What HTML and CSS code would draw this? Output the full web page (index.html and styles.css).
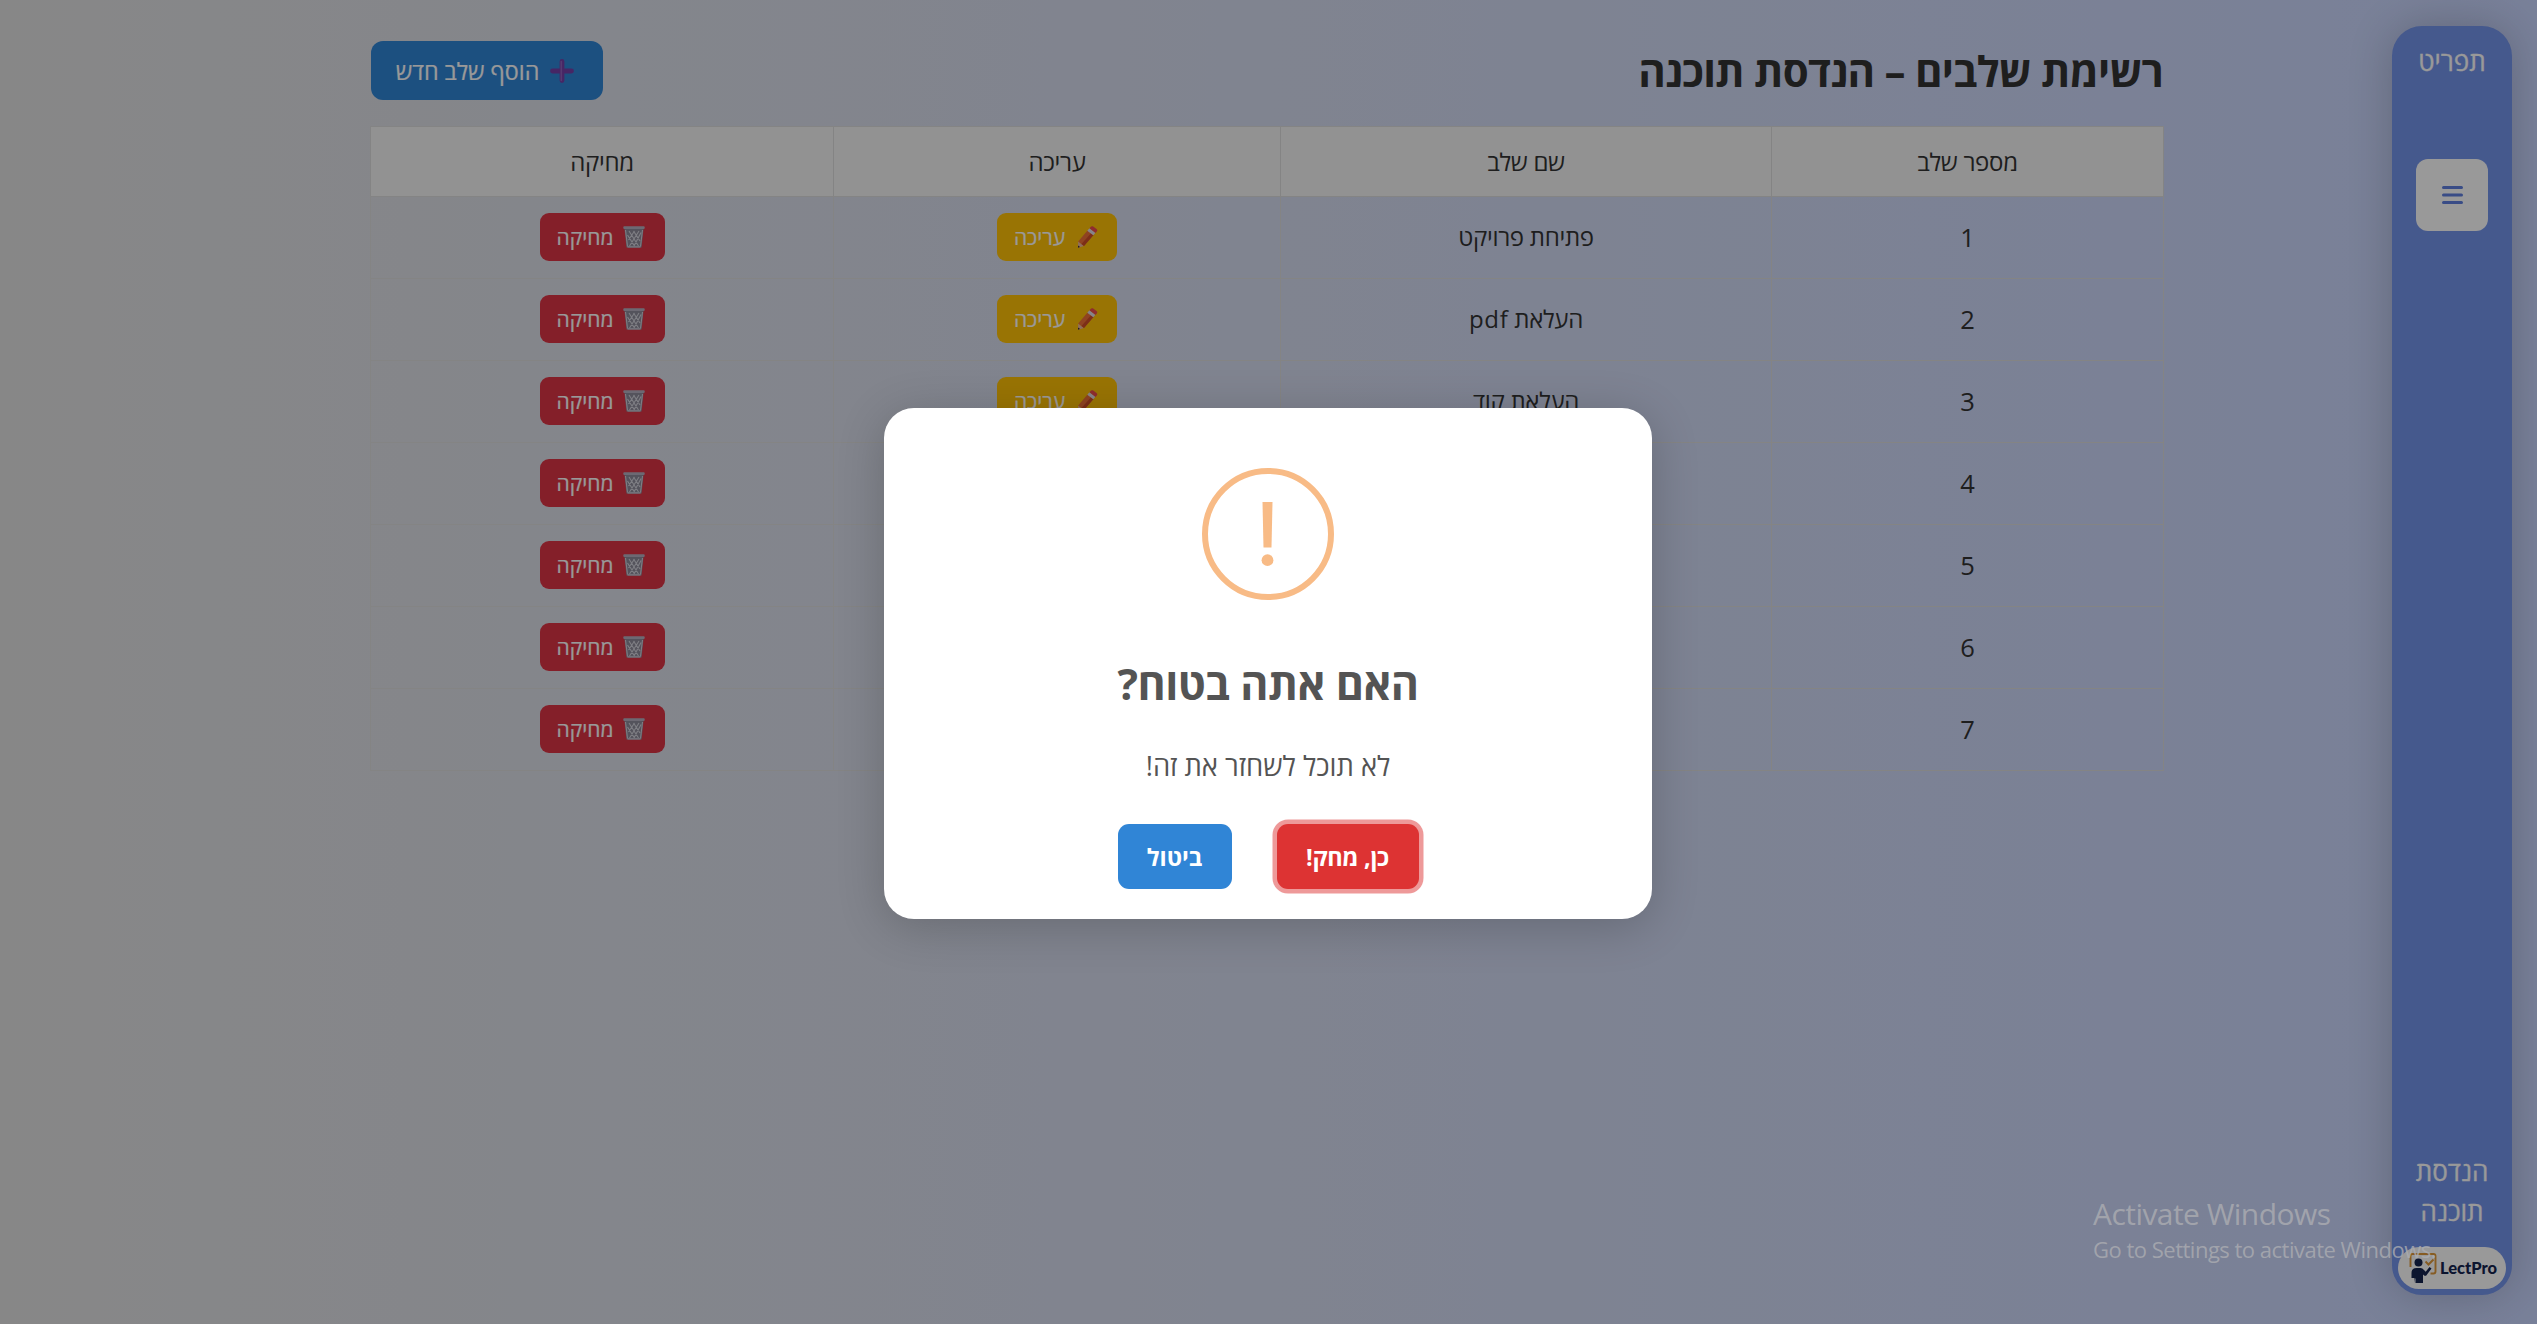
FILE: index.html
```html
<!DOCTYPE html>
<html lang="he" dir="rtl">
<head>
<meta charset="utf-8">
<title>רשימת שלבים – הנדסת תוכנה</title>
<link rel="stylesheet" href="styles.css">
</head>
<body>
<svg width="0" height="0" class="defs" aria-hidden="true">
  <symbol id="trash" viewBox="0 0 22 22">
    <path d="M1.500 3 3.500 21.500h15l2-18.500z" fill="#8d8b9a"/>
    <path d="M2.500 4 4.500 20.500M19.500 4l-2 16.500M6 5l9.500 15M10.500 5l6.500 10M16 5 6.500 20M11.500 5 5.500 14M18 6.500l-7 13.500M4.500 9l7 11" stroke="#d3d3dc" stroke-width="1.100" fill="none"/>
    <path d="M4.500 20.900h13" stroke="#c9cad6" stroke-width="1.400"/>
    <rect x="0.300" y="0.300" width="21.400" height="2.800" rx="1" fill="#b5b0c0"/>
  </symbol>
  <symbol id="pencil" viewBox="0 0 23 22">
    <path d="M3 21.800 3.200 15.500 9 20z" fill="#efb79e"/>
    <path d="M3 21.800l.1-2.300 2 1.600z" fill="#3a2a2a"/>
    <path d="M3.200 15.500 12.500 4.500 18.500 9 9 20z" fill="#ee7038"/>
    <path d="M6.500 18 16 7.200 18.500 9 9 20z" fill="#cf4d29"/>
    <path d="M12.300 4.800 14.500 2.200l6 4.500-2.200 2.600z" fill="#e0dce8"/>
    <path d="M14.500 2.200 15.600.9c.7-.8 1.700-.9 2.600-.3l3.300 2.500c.9.7 1 1.600.3 2.400l-1.300 1.400z" fill="#ee4a4d"/>
  </symbol>
  <symbol id="plus" viewBox="0 0 24 24">
    <path d="M12 2.500v19M2.500 12h19" stroke="#7540a8" stroke-width="4.800" stroke-linecap="round"/>
    <path d="M11.300 2.500v19" stroke="#8f62bd" stroke-width="1.600" stroke-linecap="round"/>
  </symbol>
</svg>

<aside class="sidebar">
  <div class="menu-title">תפריט</div>
  <button class="toggle" aria-label="תפריט"><svg viewBox="0 0 21 18" width="21" height="18"><path d="M1.500 1.500h18M1.500 9h18M1.500 16.500h18" stroke="#5f7fe0" stroke-width="3" stroke-linecap="round"/></svg></button>
  <div class="course">הנדסת<br>תוכנה</div>
  <div class="brand" dir="ltr">
    <svg viewBox="0 0 30 32" width="30" height="32">
      <path d="M3.500 15V4q0-2 2-2h21q2 0 2 2v15.500q0 2-2 2h-3" fill="none" stroke="#e09a3c" stroke-width="1.900"/>
      <path d="m18.500 9.500 3 3 5-5" fill="none" stroke="#e09a3c" stroke-width="2"/>
      <circle cx="11.500" cy="10.500" r="4" fill="#14244f"/>
      <path d="M4.500 26v-5q0-5 5-5h4q2 0 3.500 2l1.700 1.700L22.500 15l2 1.500-5.400 7.300h-1.600L16 22.500V31H8.500v-4.500H8V31l-.6-5z" fill="#14244f"/>
    </svg>
    <span>LectPro</span>
  </div>
</aside>

<main class="content">
  <header class="bar">
    <h2>רשימת שלבים – הנדסת תוכנה</h2>
    <button class="add"><svg width="24" height="24"><use href="#plus"/></svg><span>הוסף שלב חדש</span></button>
  </header>
  <table>
    <colgroup><col class="c1"><col class="c2"><col class="c3"><col class="c4"></colgroup>
    <thead><tr><th>מספר שלב</th><th>שם שלב</th><th>עריכה</th><th>מחיקה</th></tr></thead>
    <tbody>
      <tr><td class="num">1</td><td>פתיחת פרויקט</td><td><button class="btn edit"><svg width="23" height="22"><use href="#pencil"/></svg>עריכה</button></td><td><button class="btn del"><svg width="22" height="22"><use href="#trash"/></svg>מחיקה</button></td></tr>
      <tr><td class="num">2</td><td>העלאת <span class="latin">pdf</span></td><td><button class="btn edit"><svg width="23" height="22"><use href="#pencil"/></svg>עריכה</button></td><td><button class="btn del"><svg width="22" height="22"><use href="#trash"/></svg>מחיקה</button></td></tr>
      <tr><td class="num">3</td><td>העלאת קוד</td><td><button class="btn edit"><svg width="23" height="22"><use href="#pencil"/></svg>עריכה</button></td><td><button class="btn del"><svg width="22" height="22"><use href="#trash"/></svg>מחיקה</button></td></tr>
      <tr><td class="num">4</td><td></td><td></td><td><button class="btn del"><svg width="22" height="22"><use href="#trash"/></svg>מחיקה</button></td></tr>
      <tr><td class="num">5</td><td></td><td></td><td><button class="btn del"><svg width="22" height="22"><use href="#trash"/></svg>מחיקה</button></td></tr>
      <tr><td class="num">6</td><td></td><td></td><td><button class="btn del"><svg width="22" height="22"><use href="#trash"/></svg>מחיקה</button></td></tr>
      <tr><td class="num">7</td><td></td><td></td><td><button class="btn del"><svg width="22" height="22"><use href="#trash"/></svg>מחיקה</button></td></tr>
    </tbody>
  </table>
</main>

<div class="backdrop">
  <div class="popup" role="dialog">
    <div class="warn"><svg viewBox="0 0 120 120" width="120" height="120"><path d="M54.500 28h10l-1 45.500h-8z" fill="#f8bb86"/><circle cx="59.500" cy="86.200" r="5.900" fill="#f8bb86"/></svg></div>
    <h3>האם אתה בטוח?</h3>
    <p>לא תוכל לשחזר את זה!</p>
    <div class="actions"><button class="confirm">כן, מחק!</button><button class="cancel">ביטול</button></div>
  </div>
</div>

<div class="watermark" dir="ltr"><div class="w1">Activate Windows</div><div class="w2">Go to Settings to activate Windows.</div></div>
</body>
</html>
```
FILE: styles.css
```css
* { box-sizing: border-box; margin: 0; padding: 0; }
body {
  width: 2537px; height: 1324px; overflow: hidden; position: relative;
  display: flex; padding: 26px 25px 0 0;
  font-family: "Open Sans", "Noto Sans", sans-serif; color: #333;
  background: linear-gradient(to right, #e2e2e2, #c9d6ff);
}
button { border: 0; font-family: inherit; }
.defs { position: absolute; }
.sidebar {
  width: 120px; height: 1269px; flex: none; border-radius: 30px;
  background: #7494ec; color: #fff; box-shadow: 0 0 45px rgba(0,0,0,.2);
  display: flex; flex-direction: column; align-items: center; padding: 15px 0 6px;
}
.menu-title { font-size: 26px; font-weight: 500; line-height: 40px; -webkit-text-stroke: .3px #fff; }
.toggle { width: 72px; height: 72px; margin-top: 78px; border-radius: 12px; background: #fff; display: flex; align-items: center; justify-content: center; }
.course { margin-top: auto; font-size: 26px; font-weight: 500; line-height: 40px; text-align: center; -webkit-text-stroke: .3px #fff; }
.brand { width: 108px; height: 42px; margin-top: 16px; border-radius: 21px; background: #fff; display: flex; align-items: center; gap: 3px; padding-left: 9px; }
.brand span { font: 900 16.500px "Lato", sans-serif; color: #14244f; }

.content { width: 1793px; margin-right: 228px; padding-top: 15px; }
.bar { display: flex; justify-content: space-between; align-items: center; height: 59px; }
h2 { font-size: 42px; font-weight: 700; letter-spacing: -.75px; line-height: 59px; padding-right: 1px; }
.add { width: 232px; height: 59px; border-radius: 12px; background: #3085d6; color: #fff; font-size: 23.300px; font-weight: 500; display: flex; align-items: center; justify-content: center; gap: 11px; padding-right: 4px; -webkit-text-stroke: .2px #fff; }
table { width: 1793px; margin-top: 26px; border-collapse: collapse; table-layout: fixed; font-size: 24px; text-align: center; }
.c1 { width: 392px; } .c2 { width: 491px; } .c3 { width: 447px; } .c4 { width: 463px; }
th, td { border: 1px solid #ddd; letter-spacing: -.3px; }
th { height: 70px; background: #f3f3f3; font-weight: 400; }
td { height: 82px; padding-bottom: 2px; }
.num { font-size: 25.500px; }
.latin { letter-spacing: .6px; }
.btn { height: 48px; border-radius: 9px; color: #fff; font-size: 21px; font-weight: 500; display: inline-flex; align-items: center; justify-content: center; gap: 10px; vertical-align: middle; padding-right: 2px; -webkit-text-stroke: .2px #fff; }
.edit { width: 120px; background: #ffc107; }
.del { width: 125px; background: #dc3545; }

.backdrop { position: absolute; inset: 0; background: rgba(0,0,0,.4); display: flex; align-items: center; justify-content: center; padding-left: 0; padding-right: 1px; }
.popup { width: 768px; height: 511px; margin-top: 3px; border-radius: 30px; background: #fff; color: #545454; box-shadow: 0 8px 48px rgba(0,0,0,.2); display: flex; flex-direction: column; align-items: center; padding-top: 60px; }
.warn { width: 132px; height: 132px; border: 6px solid #f8bb86; border-radius: 50%; }
h3 { margin-top: 54px; font-size: 43px; font-weight: 700; letter-spacing: -.5px; line-height: 60px; }
.popup p { margin-top: 32px; font-size: 27.400px; line-height: 40px; }
.actions { display: flex; gap: 45px; margin-top: 38px; }
.actions button { height: 65px; border-radius: 11px; color: #fff; font-size: 23.500px; font-weight: 700; }
.confirm { width: 142px; background: #d33; box-shadow: 0 0 0 4.500px rgba(221,51,51,.5); letter-spacing: -.3px; }
.cancel { width: 114px; background: #3085d6; }

.watermark { position: absolute; left: 2093px; top: 1192px; color: rgba(172,173,178,.8); white-space: nowrap; }
.w1 { font-size: 30px; line-height: 44px; letter-spacing: -.55px; }
.w2 { font-size: 22px; line-height: 28px; letter-spacing: -.5px; margin-top: -1px; }
```
